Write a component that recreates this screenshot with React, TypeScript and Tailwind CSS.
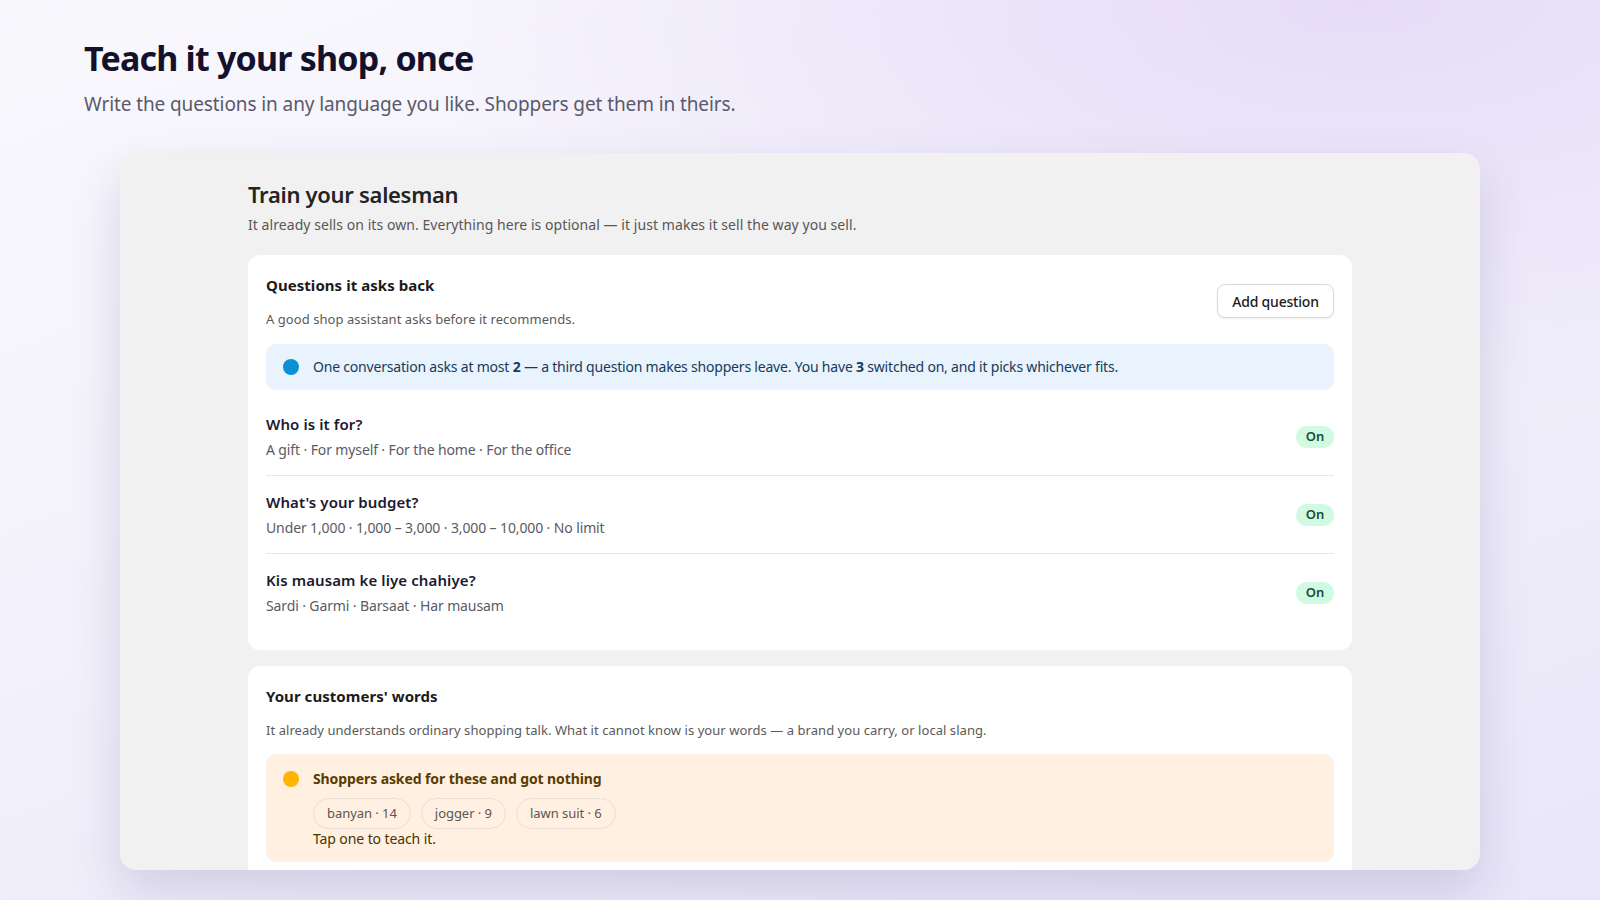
import React from "react";

const questions = [
  { q: "Who is it for?", opts: "A gift · For myself · For the home · For the office" },
  { q: "What's your budget?", opts: "Under 1,000 · 1,000 – 3,000 · 3,000 – 10,000 · No limit" },
  { q: "Kis mausam ke liye chahiye?", opts: "Sardi · Garmi · Barsaat · Har mausam" },
];

const chips = ["banyan · 14", "jogger · 9", "lawn suit · 6"];

export default function App() {
  return (
    <div className="min-h-screen w-full overflow-hidden font-['Noto_Sans',_'Open_Sans',_sans-serif] bg-[radial-gradient(ellipse_60%_45%_at_85%_0%,#e6dcf8_0%,rgba(230,220,248,0)_100%),linear-gradient(160deg,#f9f8fd_0%,#f3f1fb_45%,#e9e6f9_100%)]">
      <header className="pl-[84px] pt-[36px]">
        <h1 className="text-[34px] leading-[44px] font-bold text-[#14112a] tracking-[-0.8px]">
          Teach it your shop, once
        </h1>
        <p className="mt-[10px] text-[19px] leading-[28px] text-[#5a596b] tracking-[-0.1px]">
          Write the questions in any language you like. Shoppers get them in theirs.
        </p>
      </header>

      <div className="mx-[120px] mt-[35px] h-[717px] overflow-hidden rounded-2xl bg-[#f1f1f1] shadow-[0_22px_50px_rgba(70,60,130,0.18)]">
        <div className="mx-auto w-[1104px] pt-[25px]">
          <h2 className="text-[22px] leading-[32px] font-semibold text-[#242424] tracking-[-0.3px]">
            Train your salesman
          </h2>
          <p className="mt-[5px] text-[14px] leading-[20px] text-[#575757] tracking-[0.06px]">
            It already sells on its own. Everything here is optional — it just makes it sell the way you sell.
          </p>

          {/* Card 1 */}
          <section className="mt-[20px] rounded-xl bg-white px-[18px] pt-[18px] pb-[19px]">
            <div className="flex items-center justify-between">
              <div>
                <h3 className="text-[15px] leading-[24px] font-bold text-[#1b1b1b] tracking-[0.05px]">
                  Questions it asks back
                </h3>
                <p className="mt-[12px] text-[13px] leading-[20px] text-[#5a5a5a] tracking-[0.05px]">
                  A good shop assistant asks before it recommends.
                </p>
              </div>
              <button className="flex h-[34px] w-[117px] items-center justify-center rounded-lg border border-[#dadada] bg-white text-[14px] font-medium text-[#1b1b1b] shadow-[0_1px_2px_rgba(0,0,0,0.08)] tracking-[-0.2px]">
                Add question
              </button>
            </div>

            <div className="mt-[15px] flex h-[46px] items-center gap-[14px] rounded-[10px] bg-[#e9f3fd] pl-[17px] pr-4">
              <span className="h-4 w-4 shrink-0 rounded-full bg-[#0b8fd5]" />
              <p className="text-[14px] leading-[22px] text-[#163a5a] tracking-[-0.2px]">
                One conversation asks at most <b className="font-bold">2</b> — a third question makes shoppers leave. You have{" "}
                <b className="font-bold">3</b> switched on, and it picks whichever fits.
              </p>
            </div>

            <div className="mt-2">
              {questions.map((item, i) => (
                <div
                  key={item.q}
                  className={`flex items-center justify-between pt-[14px] pb-[13px] ${i < questions.length - 1 ? "border-b border-[#e8e8e8]" : ""}`}
                >
                  <div>
                    <div className="text-[15px] leading-[24px] font-semibold text-[#1c1a30] tracking-[0.1px]">
                      {item.q}
                    </div>
                    <div className="mt-[2px] text-[14px] leading-[24px] text-[#5b5a66] tracking-[-0.12px]">
                      {item.opts}
                    </div>
                  </div>
                  <span className="flex h-[22px] w-[38px] items-center justify-center rounded-full bg-[#d1fae3] text-[13px] font-semibold text-[#1b4d36]">
                    On
                  </span>
                </div>
              ))}
            </div>
          </section>

          {/* Card 2 */}
          <section className="mt-4 rounded-xl bg-white px-[18px] pt-[18px] pb-[18px]">
            <h3 className="text-[15px] leading-[24px] font-bold text-[#1b1b1b] tracking-[0.05px]">
              Your customers' words
            </h3>
            <p className="mt-[12px] text-[13px] leading-[20px] text-[#5a5a5a] tracking-[0.05px]">
              It already understands ordinary shopping talk. What it cannot know is your words — a brand you carry, or local slang.
            </p>

            <div className="mt-[14px] rounded-[10px] bg-[#fff0e2] pl-[17px] pr-4 pt-[14px] pb-[13px]">
              <div className="flex items-center gap-[14px]">
                <span className="h-4 w-4 shrink-0 rounded-full bg-[#ffb400]" />
                <span className="text-[14px] leading-[22px] font-bold text-[#5a3c00] tracking-[-0.1px]">
                  Shoppers asked for these and got nothing
                </span>
              </div>
              <div className="pl-[30px]">
                <div className="mt-[8px] flex gap-[10px]">
                  {chips.map((c) => (
                    <span
                      key={c}
                      className="flex h-[31px] items-center rounded-full border border-[#e6dfd8] px-[13px] text-[13px] text-[#5b5752] tracking-[-0.05px]"
                    >
                      {c}
                    </span>
                  ))}
                </div>
                <p className="text-[14px] leading-[20px] text-[#4a3400] tracking-[-0.1px]">Tap one to teach it.</p>
              </div>
            </div>

            <div className="mt-5 h-[120px]" />
          </section>
        </div>
      </div>
    </div>
  );
}
